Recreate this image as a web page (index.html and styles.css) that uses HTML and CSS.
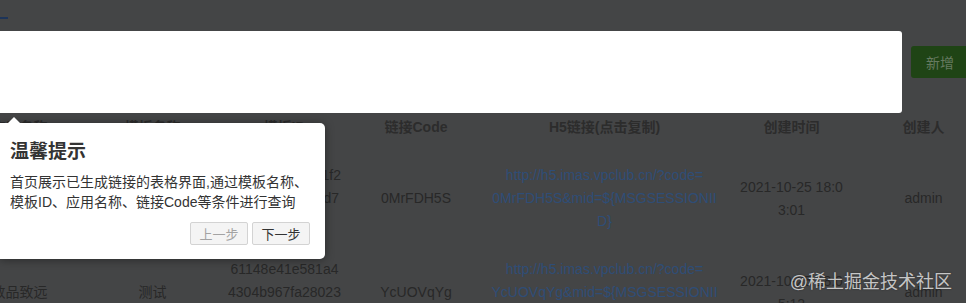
FILE: index.html
```html
<!DOCTYPE html>
<html>
<head>
	<title>链接管理</title>
	<link rel="stylesheet" href="styles.css">
</head>
<body>

	<div class="screen">
		<div class="tabs">
			<div class="tab-line"></div>
		</div>

		<div class="toolbar">
			<button class="btn-add">新增</button>
		</div>

		<table class="grid">
			<colgroup>
				<col class="c-app">
				<col class="c-tpl">
				<col class="c-id">
				<col class="c-code">
				<col class="c-link">
				<col class="c-time">
				<col class="c-user">
			</colgroup>
			<thead>
				<tr>
					<th>应用名称</th>
					<th>模板名称</th>
					<th>模板ID</th>
					<th>链接Code</th>
					<th>H5链接(点击复制)</th>
					<th class="time">创建时间</th>
					<th>创建人</th>
				</tr>
			</thead>
			<tbody>
				<tr>
					<td>数品致远</td>
					<td>测试</td>
					<td>5e82a9047b6d1f29a0b3e54817ed7a63</td>
					<td>0MrFDH5S</td>
					<td><a href="#">http://h5.imas.vpclub.cn/?code=<br>0MrFDH5S&amp;mid=${MSGSESSIONIID}</a></td>
					<td class="time">2021-10-25 18:03:01</td>
					<td>admin</td>
				</tr>
				<tr>
					<td>数品致远</td>
					<td>测试</td>
					<td>61148e41e581a44304b967fa28023b12</td>
					<td>YcUOVqYg</td>
					<td><a href="#">http://h5.imas.vpclub.cn/?code=<br>YcUOVqYg&amp;mid=${MSGSESSIONIID}</a></td>
					<td class="time">2021-10-25 18:05:12</td>
					<td>admin</td>
				</tr>
			</tbody>
		</table>

		<!-- guide layer -->
		<div class="highlight"></div>

		<div class="tip">
			<div class="tip-title">温馨提示</div>
			<div class="tip-text">首页展示已生成链接的表格界面,通过模板名称、模板ID、应用名称、链接Code等条件进行查询</div>
			<div class="tip-buttons">
				<button class="tip-btn disabled">上一步</button>
				<button class="tip-btn">下一步</button>
			</div>
		</div>

		<div class="watermark">@稀土掘金技术社区</div>
	</div>

</body>
</html>
```

FILE: styles.css
```css
body{
	margin: 0;
	font-family: "Liberation Sans", "Noto Sans CJK SC", sans-serif;
	font-size: 14px;
}

.screen{
	position: relative;
	width: 966px;
	height: 303px;
	overflow: hidden;
	background-color: #444546;
	color: #282828;
}

/* page under the mask */
.tabs{
	height: 19px;
	display: flex;
	align-items: flex-end;
}

.tab-line{
	width: 8px;
	height: 2px;
	background-color: #1d3459;
}

.toolbar{
	display: flex;
	justify-content: flex-end;
	margin-top: 27px;
}

.btn-add{
	width: 58px;
	height: 32px;
	margin-right: -3px;
	border: 0;
	border-radius: 3px;
	background-color: #1f4415;
	color: #667a60;
	font-family: inherit;
	font-size: 14px;
}

.grid{
	table-layout: fixed;
	border-collapse: collapse;
	width: 1038px;
	margin-top: 25px;
	margin-left: -47px;
}

.c-app{ width: 133px; }
.c-tpl{ width: 133px; }
.c-id{ width: 131px; }
.c-code{ width: 132px; }
.c-link{ width: 245px; }
.c-time{ width: 129px; }
.c-user{ width: 135px; }

.grid th,
.grid td{
	padding: 13px 8px 12px;
	line-height: 23px;
	text-align: center;
	vertical-align: middle;
	word-break: break-all;
}

.grid th{
	font-weight: bold;
	color: #2c2c2c;
}

.grid .time{
	padding-left: 11px;
	padding-right: 11px;
}

.grid a{
	color: #2f4d76;
	text-decoration: none;
}

/* guide layer */
.highlight{
	position: absolute;
	left: 0;
	top: 31px;
	width: 902px;
	height: 82px;
	background-color: #fff;
	border-radius: 0 3px 3px 0;
}

.tip{
	position: absolute;
	left: 0;
	top: 123px;
	width: 325px;
	box-sizing: border-box;
	padding: 15px 15px 14px 10px;
	background-color: #fff;
	border-radius: 0 5px 5px 0;
	box-shadow: 0 1px 10px rgba(0,0,0,.4);
	color: #333;
}

.tip::before{
	content: "";
	position: absolute;
	left: 8px;
	top: -12px;
	border: 6px solid transparent;
	border-bottom-color: #fff;
}

.tip-title{
	font-size: 19px;
	font-weight: bold;
	line-height: 28px;
	color: #333;
}

.tip-text{
	margin-top: 6px;
	font-size: 14px;
	line-height: 20px;
	color: #333;
}

.tip-buttons{
	display: flex;
	justify-content: flex-end;
	gap: 4px;
	margin-top: 10px;
}

.tip-btn{
	height: 23px;
	width: 58px;
	padding: 0;
	border: 1px solid #d3d3d3;
	border-radius: 2px;
	background-color: #f4f4f4;
	color: #333;
	font-family: inherit;
	font-size: 13px;
}

.tip-btn.disabled{
	color: #a3a3a3;
}

.watermark{
	position: absolute;
	right: 14px;
	top: 267px;
	font-size: 18px;
	color: rgba(225,225,225,.85);
	text-shadow: 0 0 2px rgba(0,0,0,.4);
}
```
